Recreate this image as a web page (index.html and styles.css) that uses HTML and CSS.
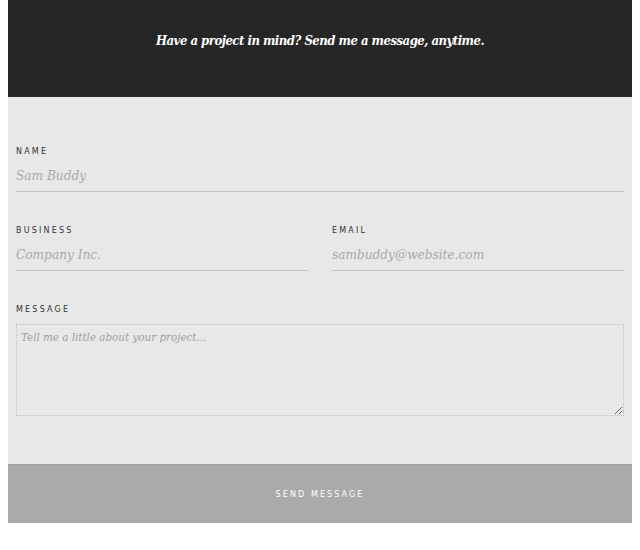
FILE: index.html
```html
<!DOCTYPE html>
<html>
<head>
<meta charset="utf-8">
<link rel="stylesheet" href="styles.css">
</head>
<body>
<div class="page">
  <header class="hero">
    <p class="hero-text">Have a project in mind? Send me a message, anytime.</p>
  </header>
  <form class="form">
    <div class="field">
      <label class="label">Name</label>
      <input class="input" type="text" placeholder="Sam Buddy">
    </div>
    <div class="row">
      <div class="field">
        <label class="label">Business</label>
        <input class="input" type="text" placeholder="Company Inc.">
      </div>
      <div class="field">
        <label class="label">Email</label>
        <input class="input" type="text" placeholder="sambuddy@website.com">
      </div>
    </div>
    <div class="field">
      <label class="label">Message</label>
      <textarea class="textarea" placeholder="Tell me a little about your project..."></textarea>
    </div>
  </form>
  <button class="send" type="button">Send Message</button>
</div>
</body>
</html>
```
FILE: styles.css
```css
* { box-sizing: border-box; }
html, body { background: #fff; }
body { margin: 0 8px; }
.page { width: 624px; }
.hero {
  background: #262626;
  height: 97px;
  display: flex;
  align-items: flex-start;
  justify-content: center;
  padding-top: 32px;
}
.hero-text {
  margin: 0;
  color: #fff;
  font-family: "DejaVu Serif", serif;
  font-stretch: condensed;
  font-style: italic;
  font-weight: bold;
  font-size: 13px;
  line-height: 18px;
  letter-spacing: -0.5px;
}
.form {
  background: #e8e8e8;
  padding: 49px 8px 48px;
  display: flex;
  flex-direction: column;
  gap: 33px;
}
.row {
  display: grid;
  grid-template-columns: 1fr 1fr;
  column-gap: 24px;
}
.field { display: flex; flex-direction: column; }
.label {
  font-family: "DejaVu Sans", sans-serif;
  font-size: 8px;
  line-height: 12px;
  letter-spacing: 2.2px;
  text-transform: uppercase;
  color: #333;
}
.input {
  height: 34px;
  border: none;
  border-bottom: 1px solid #c4c4c4;
  background: transparent;
  padding: 0;
  font-family: "DejaVu Serif", serif;
  font-stretch: condensed;
  font-style: italic;
  font-size: 13.5px;
  color: #444;
  outline: none;
}
.input::placeholder { color: #a8a8a8; opacity: 1; }
.textarea::placeholder { color: #9e9e9e; opacity: 1; }
.textarea {
  margin-top: 8px;
  height: 92px;
  border: 1px dotted #bdbdbd;
  background: transparent;
  padding: 5px 4px;
  font-family: "DejaVu Serif", serif;
  font-stretch: condensed;
  font-style: italic;
  font-size: 11.5px;
  color: #444;
  resize: vertical;
  outline: none;
}
.send {
  display: block;
  width: 624px;
  height: 59px;
  border: none;
  border-top: 1px solid #a0a0a0;
  background: #aaaaaa;
  color: #fff;
  font-family: "DejaVu Sans", sans-serif;
  font-size: 8px;
  letter-spacing: 2.1px;
  text-transform: uppercase;
  padding: 0;
  cursor: pointer;
}
```
